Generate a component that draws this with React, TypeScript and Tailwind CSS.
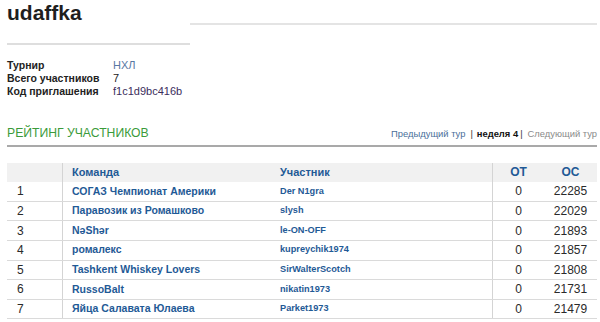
import React from 'react';

interface Row {
  place: number;
  team: string;
  player: string;
  ot: number;
  os: number;
}

const rows: Row[] = [
  { place: 1, team: 'СОГАЗ Чемпионат Америки', player: 'Der N1gra', ot: 0, os: 22285 },
  { place: 2, team: 'Паравозик из Ромашково', player: 'slysh', ot: 0, os: 22029 },
  { place: 3, team: 'NəShər', player: 'le-ON-OFF', ot: 0, os: 21893 },
  { place: 4, team: 'ромалекс', player: 'kupreychik1974', ot: 0, os: 21857 },
  { place: 5, team: 'Tashkent Whiskey Lovers', player: 'SirWalterScotch', ot: 0, os: 21808 },
  { place: 6, team: 'RussoBalt', player: 'nikatin1973', ot: 0, os: 21731 },
  { place: 7, team: 'Яйца Салавата Юлаева', player: 'Parket1973', ot: 0, os: 21479 },
];

const App: React.FC = () => {
  return (
    <div className="w-[600px] h-[322px] overflow-hidden bg-white pl-[7px] pr-[3px] font-['Liberation_Sans',Arial,sans-serif] text-[#222]">
      {/* Title */}
      <div className="flex items-start">
        <div className="w-[183px] h-[45px] border-b-2 border-[#dedede]">
          <h1 className="pt-[1px] text-[21px] leading-[24px] font-bold text-[#1e1e1e]">udaffka</h1>
        </div>
        <div className="flex-1 h-[25px] border-b-2 border-[#e4e4e4]" />
      </div>

      {/* League info */}
      <div className="mt-[14px] text-[10.5px] leading-[13px]">
        <div className="flex">
          <span className="w-[106px] font-bold">Турнир</span>
          <span className="text-[11px] text-[#5878a3]">НХЛ</span>
        </div>
        <div className="flex">
          <span className="w-[106px] font-bold">Всего участников</span>
          <span className="text-[11px] text-[#222]">7</span>
        </div>
        <div className="flex">
          <span className="w-[106px] font-bold">Код приглашения</span>
          <span className="text-[11px] text-[#3b2d5c]">f1c1d9bc416b</span>
        </div>
      </div>

      {/* Section header */}
      <div className="mt-[26.5px] flex items-baseline justify-between pb-[3.5px] border-b-2 border-[#a9a9a9]">
        <h2 className="text-[12.2px] leading-[16px] text-[#3b9b3b]">РЕЙТИНГ УЧАСТНИКОВ</h2>
        <div className="flex items-baseline text-[9.4px] leading-[16px]">
          <a className="text-[#4a6f9a]">Предыдущий тур</a>
          <span className="ml-[5px] text-[#333]">|</span>
          <span className="ml-[4px] font-bold text-[#111]">неделя 4</span>
          <span className="ml-[2px] text-[#333]">|</span>
          <span className="ml-[5px] text-[#8a8a8a]">Следующий тур</span>
        </div>
      </div>

      {/* Table */}
      <div className="mt-[15.7px]">
        <div className="flex h-[19.5px] items-center bg-[#f1f1f1] text-[11px] font-bold text-[#1f5a96]">
          <div className="w-[56px] h-full border-r border-[#d4d4d4]" />
          <div className="w-[209px] pl-[9px]">Команда</div>
          <div className="w-[220px] pl-[8px]">Участник</div>
          <div className="w-[52px] h-full flex items-center justify-center border-l border-[#d4d4d4] text-[12px]">ОТ</div>
          <div className="flex-1 text-center text-[12px]">ОС</div>
        </div>
        {rows.map((r) => (
          <div key={r.place} className="flex h-[19.6px] items-center border-b border-[#dadada]">
            <div className="w-[56px] h-full flex items-center pl-[10px] border-r border-[#d4d4d4] text-[12px] text-[#2a2a2a]">
              {r.place}
            </div>
            <div className="w-[209px] pl-[9px] text-[10.5px] font-bold text-[#1f5a96] whitespace-nowrap">{r.team}</div>
            <div className="w-[220px] pl-[8px] text-[9.2px] font-bold text-[#1f5a96] whitespace-nowrap">{r.player}</div>
            <div className="w-[52px] h-full flex items-center justify-center border-l border-[#d4d4d4] text-[12px] text-[#2a2a2a]">
              {r.ot}
            </div>
            <div className="flex-1 text-center text-[12px] text-[#2a2a2a]">{r.os}</div>
          </div>
        ))}
      </div>
    </div>
  );
};

export default App;
